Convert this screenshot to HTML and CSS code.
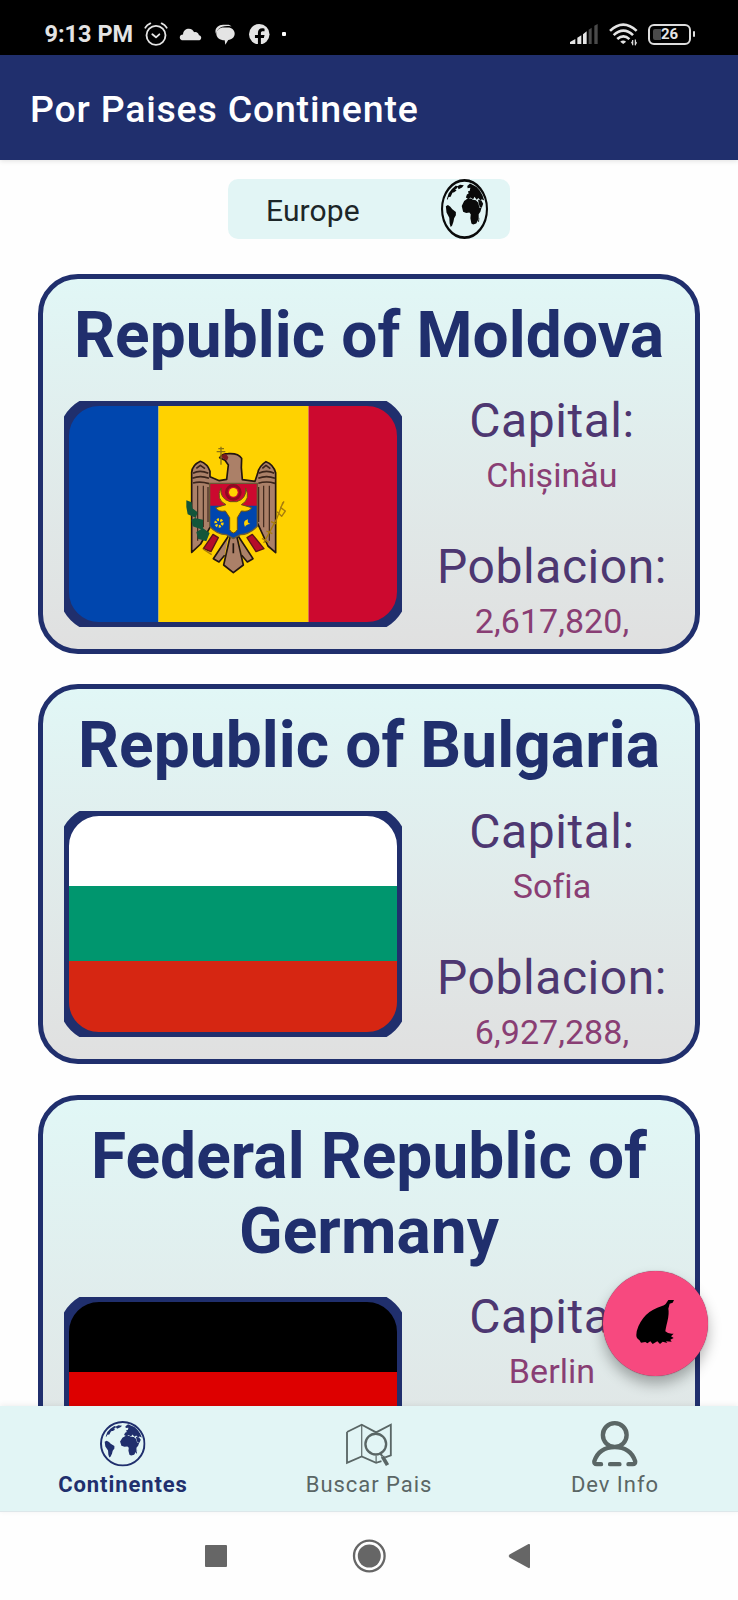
FILE: index.html
```html
<!DOCTYPE html>
<html lang="es">
<head>
<meta charset="utf-8">
<title>Por Paises Continente</title>
<link rel="stylesheet" href="styles.css">
</head>
<body>
<svg class="defs" aria-hidden="true">
  <symbol id="globe" viewBox="0 0 136 136" preserveAspectRatio="none">
    <circle cx="68" cy="68" r="65" fill="none" stroke="currentColor" stroke-width="6"/>
    <g fill="currentColor">
      <path d="M14 62l6-3 7 4 5 5 11 7v7l-5 7-2 8-4 9-4 3-3-8-1-13-8-12z"/>
      <path d="M17 46l5-13 9-10 12-8 5 2-3 5-4 1 4 3-7 4-5 1-5 9-6 1-3 6zM46 17l9-4 11 1-5 5-10 4-2-3z"/>
      <path d="M72 42l3-7 5-2-2-5 5-1 2-7-8 1-1-5 8-6 10 4 9 4 9 8 8 11 5 12-7-3-4 3-6-6-5 4-6-7-4 6-8-4-5 4z"/>
      <path d="M60 61l7-11 9-5 11-1 5 3 9 1 7 6 3 11 6 1-3 8-5 6v10l-7 11-9 2-5-2-3-12 1-9-4-4-9 1-9-3z"/>
      <path d="M107 47l10 2 5 7-4 9-6-1zM107 96l4-9-1 11z"/>
    </g>
  </symbol>
</svg>

<header class="status">
  <div class="status-left">
    <span class="clock">9:13 PM</span>
    <svg class="ic-alarm" viewBox="0 0 72 72" fill="none" stroke="#e4e4e4" stroke-width="5.500" stroke-linecap="round" stroke-linejoin="round"><circle cx="36" cy="40" r="28.500"/><path d="M25 37l11 9 10-9M4 17q5-9 15-13M68 17q-5-9-15-13"/></svg>
    <svg class="ic-cloud" viewBox="0 0 68 40" fill="#e4e4e4"><path d="M12 38C5 38 1 34 1 29s4-9 10-9C11 8 20 2 29 2c8 0 14 5 16 11 8-2 14 3 15 9 5 1 7 4 7 8 0 5-4 8-9 8z"/></svg>
    <svg class="ic-chat" viewBox="0 0 62 64"><path d="M3 30C-3 16 8 2 25 2h14c5 0 9 2 12 5-15-3-33-1-40 8-4 4-6 9-8 15z" fill="#e4e4e4"/><path d="M27 10h13c12 0 21 8 21 19 0 12-9 19-20 20l-9 15-2-14C15 50 4 42 4 29c0-11 11-19 23-19z" fill="#e4e4e4"/></svg>
    <svg class="ic-face" viewBox="0 0 62 62"><circle cx="31" cy="31" r="31" fill="#e4e4e4"/><path d="M27 62V42h-9v-9h9v-6c0-11 7-16 20-13v8c-8-1-11 0-11 6v5h11l-2 9h-9v20z" fill="#000"/></svg>
    <i class="more-dot"></i>
  </div>
  <div class="status-right">
    <svg class="ic-signal" viewBox="0 0 84 60"><path d="M0 60V54l16-9v15zM22 41l12-7v26H22zM39 31l11-9v38H39z" fill="#e4e4e4"/><path d="M56 17l9-6v49h-9zM73 5l10-5v60H73z" fill="#4a4a4a"/></svg>
    <svg class="ic-wifi" viewBox="0 0 88 70" fill="none" stroke="#e4e4e4" stroke-width="8"><path d="M3 24Q43-14 84 24M14 37q30-28 59 0M25 49q19-17 37 0"/><path d="M43 64l-9-7q9-8 18 0z" fill="#e4e4e4" stroke="none"/><path d="M72 52v16M80 50v18" stroke-width="3.500"/><path d="M67 60l5-8v14zM85 60l-5 9V54z" fill="#e4e4e4" stroke="none"/></svg>
    <div class="battery"><i class="charge"></i><span>26</span></div>
    <i class="battery-cap"></i>
  </div>
</header>

<div class="appbar"><h1>Por Paises Continente</h1></div>

<main class="content">
  <div class="picker"><span>Europe</span><svg><use href="#globe"/></svg></div>

  <article class="card">
    <h2>Republic of Moldova</h2>
    <div class="row">
      <svg class="flag" viewBox="0 0 338 226">
        <clipPath id="fm"><rect x="4" y="4" width="330" height="218" rx="31"/></clipPath>
        <g clip-path="url(#fm)">
          <path d="M0 0h94.500v226H0z" fill="#0046ae"/><path d="M94.500 0h150v226h-150z" fill="#ffd200"/><path d="M244.500 0H338v226h-93.500z" fill="#cc092f"/>
        </g>
        <g transform="scale(.33333) translate(-103 -408)" stroke-linejoin="round">
          <path d="M486 862V622q2-22 26-33 22 8 29 30v16l28 12 22-4 5-43-10-14-16-8q8-12 26-12 30-2 40 14l-1 28 3 36 38 5 8-24q4-22 25-35 22 8 29 33v240l-23-20-34-74-130 0-38 68z" fill="#ab8068" stroke="#24160f" stroke-width="5"/>
          <path d="M490 625q20-12 46 0M488 640q24-10 50 0M490 654q22-6 48 2M687 625q24-12 47 0M686 640q24-10 50 0M686 655q24-8 50 0M500 610l12-9 14 10M698 610l11-9 13 10" fill="none" stroke="#3b241a" stroke-width="5"/>
          <path d="M504 662v165M521 662v125M535 666v105M719 662v165M702 662v125M687 666v105" fill="none" stroke="#3b241a" stroke-width="3.500"/>
          <path d="M590 568q-12-3-16 8l18 11 4-10z" fill="#7b1b20"/>
          <path d="M574 545v54M561 560h26M566 551h17" fill="none" stroke="#8b7212" stroke-width="4"/>
          <path d="M553 800l29 20-38 50-24-12z" fill="#ffd200"/><path d="M668 800l-29 20 38 50 24-12z" fill="#ffd200"/>
          <path d="M550 808l16 10-22 42-23-9zM668 808l-16 10 27 42 24-9z" fill="#b50d2a" stroke="#5b1715" stroke-width="4"/>
          <path d="M596 814l-45 67 17 10 17-20M626 814l44 67-17 10-17-20" fill="#ab8068" stroke="#24160f" stroke-width="5"/>
          <path d="M602 812l-20 88 29 23 30-23-20-88zM611 835v30" fill="#ab8068" stroke="#24160f" stroke-width="5"/>
          <path d="M540 655h143v72H540z" fill="#cc092f"/>
          <path d="M540 722h143v62q-25 25-51 25l-21 12-21-12q-28 0-50-25z" fill="#0046ae"/>
          <path d="M540 655h143v129q-25 25-51 25l-21 12-21-12q-28 0-50-25z" fill="none" stroke="#6b5a35" stroke-width="4"/>
          <path d="M574 669q-17 34 15 50l-31 9q8 14 29 10l13 20v36q11 20 23 0v-36l12-20q24 4 31-10l-31-9q29-16 13-50 4 32-27 41h-20q-31-9-27-41z" fill="#ffd200" stroke="#6b4d16" stroke-width="3"/>
          <circle cx="611" cy="682" r="21" fill="none" stroke="#8d0b20" stroke-width="8"/><circle cx="611" cy="682" r="13" fill="#ffd200"/>
          <circle cx="568" cy="774" r="10" fill="none" stroke="#ffd200" stroke-width="8" stroke-dasharray="6 4"/>
          <path d="M655 763q-18 4-9 23 3-8 16-9-10-2-7-14z" fill="#ffd200"/>
          <path d="M470 706l16 6 2 18 16 12-6 18 22 4v26l20 14-10 25-25-8-5-20 14-8-25-9-4-20 13-6-24-10-4-22z" fill="#13553a"/>
          <path d="M702 834l38-70 20-52M697 820l20 12M710 798l18 8M724 770l16 7M742 740l14 14 11-16-14-10 10-19M520 852l26 17" fill="none" stroke="#a77d0c" stroke-width="4"/>
        </g>
        <rect class="frame" width="338" height="226" rx="35"/>
      </svg>
      <dl><dt>Capital:</dt><dd>Chișinău</dd><dt>Poblacion:</dt><dd>2,617,820,</dd></dl>
    </div>
  </article>

  <article class="card">
    <h2>Republic of Bulgaria</h2>
    <div class="row">
      <svg class="flag" viewBox="0 0 338 226">
        <clipPath id="fb"><rect x="4" y="4" width="330" height="218" rx="31"/></clipPath>
        <g clip-path="url(#fb)"><path d="M0 0h338v76H0z" fill="#fff"/><path d="M0 75h338v76H0z" fill="#00966e"/><path d="M0 150h338V226H0z" fill="#d62612"/></g>
        <rect class="frame" width="338" height="226" rx="35"/>
      </svg>
      <dl><dt>Capital:</dt><dd>Sofia</dd><dt>Poblacion:</dt><dd>6,927,288,</dd></dl>
    </div>
  </article>

  <article class="card">
    <h2>Federal Republic of Germany</h2>
    <div class="row">
      <svg class="flag" viewBox="0 0 338 226">
        <clipPath id="fg"><rect x="4" y="4" width="330" height="218" rx="31"/></clipPath>
        <g clip-path="url(#fg)"><path d="M0 0h338v76H0z" fill="#000"/><path d="M0 75h338v75H0z" fill="#d00"/><path d="M0 150h338v76H0z" fill="#ffce00"/></g>
        <rect class="frame" width="338" height="226" rx="35"/>
      </svg>
      <dl><dt>Capital:</dt><dd>Berlin</dd></dl>
    </div>
  </article>
</main>

<button class="fab" aria-label="Filtro">
  <svg viewBox="0 0 180 192"><path d="M122 42l8-12h17l-4 8-9 3-4 15q3 14-3 39-5 20-6 29 8 9 25 7l-8 8 8 5-10 5 4 6-17-1 4 5-14-4-8 7-8-8-14 8-7-8-9 6-6-4-13 2-5-8q-10-6-9-16 1-24 21-50 16-21 42-31l20-7z"/></svg>
</button>

<nav class="tabs">
  <a class="tab active"><svg><use href="#globe"/></svg><span>Continentes</span></a>
  <a class="tab"><svg viewBox="0 0 136 136" fill="none" stroke="currentColor" stroke-width="5.500"><path d="M3 33L47 11l43 23 44-23v92l-17 6M3 33v92l44-19 43 19 16-5"/><path d="M47 11v95M90 104v21M90 34v6" stroke-width="3.500"/><circle cx="89" cy="69" r="31" stroke-width="7"/><path d="M103 98l6 8" stroke-width="6"/><path d="M109 106l15 26" stroke-width="11"/></svg><span>Buscar Pais</span></a>
  <a class="tab"><svg viewBox="0 0 136 136" fill="none" stroke="currentColor" stroke-width="13" stroke-linecap="round" stroke-linejoin="round"><circle cx="68" cy="42" r="35.500"/><path d="M27 129H14q-8 0-7-9 14-42 61-42t61 42q1 9-7 9h-13M54 129h28"/></svg><span>Dev Info</span></a>
</nav>

<footer class="sysnav">
  <svg viewBox="0 0 738 88"><g fill="#666"><rect x="205" y="33" width="22" height="22" rx="1"/><circle cx="369.300" cy="44" r="11.500"/><path d="M509.500 42.500L528.500 32q1.500-.5 1.500 1v22q0 1.500-1.500 1l-19-10.500q-1.500-1.500 0-3z"/></g><circle cx="369.300" cy="44" r="15.300" fill="none" stroke="#666" stroke-width="2.300"/></svg>
</footer>
</body>
</html>
```
FILE: styles.css
```css
* { box-sizing: border-box; }
body { margin: 0; width: 738px; height: 1600px; overflow: hidden; display: flex; flex-direction: column; position: relative; background: #fefefe; font-family: Roboto, sans-serif; }
h1, h2, dl, dd { margin: 0; }
svg { display: block; }
.defs { position: absolute; width: 0; height: 0; }

.status { flex: none; height: 55px; padding: 13px 43px 0 44.500px; background: #000; display: flex; justify-content: space-between; }
.status-left, .status-right { display: flex; align-items: center; height: 42px; }
.clock { width: 99.500px; color: #e4e4e4; font-size: 23.500px; font-weight: 700; line-height: 42px; white-space: nowrap; }
.ic-alarm { width: 24px; height: 24px; }
.ic-cloud { width: 23px; height: 13px; margin-left: 11px; }
.ic-chat { width: 20px; height: 21px; margin-left: 13px; }
.ic-face { width: 20.500px; height: 20.500px; margin-left: 14px; }
.more-dot { width: 4px; height: 4px; border-radius: 1px; margin-left: 12px; background: #fff; }
.ic-signal { width: 28px; height: 20px; }
.ic-wifi { width: 29px; height: 23px; margin-left: 11px; }
.battery { width: 43px; height: 21px; margin-left: 10px; border: 2.500px solid #ddd; border-radius: 6px; display: flex; align-items: center; padding-left: 3px; }
.battery .charge { width: 8px; height: 11px; border-radius: 2px 0 0 2px; background: #4a4a4a; }
.battery span { color: #e4e4e4; font-size: 15px; font-weight: 700; line-height: 17px; }
.battery-cap { width: 2px; height: 6px; margin-left: 2px; background: #ddd; border-radius: 1px; }

.appbar { flex: none; height: 105px; padding-left: 30px; background: #202f6d; display: flex; align-items: center; box-shadow: 0 1px 5px rgba(0,0,0,.12); position: relative; }
.appbar h1 { color: #fff; font-size: 37.500px; line-height: 44px; font-weight: 500; letter-spacing: .78px; padding-top: 2px; white-space: nowrap; }

.content { flex: none; height: 1246px; overflow: hidden; padding: 19px 38px 0; display: flex; flex-direction: column; align-items: center; }
.picker { flex: none; width: 282px; height: 60px; margin-bottom: 34.500px; border-radius: 10px; background: #e2f5f5; padding: 0 22px 0 38px; display: flex; justify-content: space-between; align-items: center; color: #1c2628; font-size: 30px; }
.picker span { line-height: 36px; padding-top: 4px; letter-spacing: .1px; }
.picker svg { width: 47px; height: 60px; color: #0a0a0a; }

.card { flex: none; width: 662px; margin-bottom: 30.500px; height: 380px; border: 5px solid #202f6d; border-radius: 40px; background: linear-gradient(#e1f7f6, #e0e0e0); overflow: hidden; }
.card:last-child { height: 455px; }
.card h2 { color: #202f6d; font-size: 64px; line-height: 75px; font-weight: 700; letter-spacing: .08px; text-align: center; padding: 19px 20px 0; }
.row { display: flex; padding: 28.300px 0 0 21px; }
.flag { flex: none; width: 338px; height: 226px; overflow: hidden; }
.frame { fill: none; stroke: #202f6d; stroke-width: 10px; }
dl { flex: 1; text-align: center; margin: -7.800px -7px 0 0; }
dt { color: #4d3771; font-size: 48px; line-height: 56px; letter-spacing: .55px; }
dd { color: #893e74; font-size: 34px; line-height: 40px; padding-top: 6px; letter-spacing: .05px; }
dd + dt { margin-top: 44px; }

.fab { position: absolute; left: 602.500px; top: 1270.500px; width: 105px; height: 105px; border: 0; border-radius: 50%; padding: 19.500px 0 0 22px; display: flex; align-items: flex-start; background: #f7497f; box-shadow: 0 0 1px #5a2940, 0 8px 14px rgba(0,0,0,.3); }
.fab svg { width: 60px; height: 64px; }

.tabs { flex: none; height: 106px; background: #e2f5f5; border-bottom: 1px solid #dde7ea; display: grid; grid-template-columns: repeat(3, 1fr); box-shadow: 0 -1px 6px rgba(0,0,0,.07); position: relative; }
.tab { display: flex; flex-direction: column; align-items: center; padding-top: 15px; color: #5a6665; font-size: 22px; letter-spacing: .95px; }
.tab svg { width: 45.500px; height: 45.500px; }
.tab span { line-height: 26px; margin-top: 5px; }
.tab.active { color: #202f6d; }
.tab.active span { font-weight: 700; letter-spacing: .9px; }
.sysnav { flex: none; height: 88px; background: #fefefe; }
.sysnav svg { width: 738px; height: 88px; }
```
